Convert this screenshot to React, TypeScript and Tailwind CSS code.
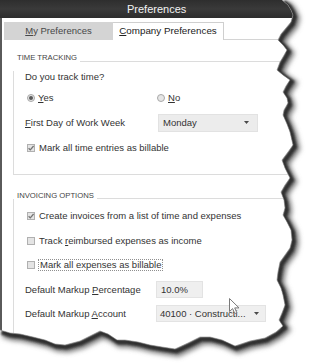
import React from "react";

const rightEdge: [number, number][] = [
  [282, 0], [288, 5], [291, 10], [293, 15], [291, 22], [286, 28], [281, 34], [278, 40], [283, 45], [287, 50],
  [283, 57], [280, 62], [277, 70], [283, 75], [290, 80], [286, 86], [283, 92], [287, 98], [288, 103], [284, 110],
  [283, 115], [287, 124], [290, 132], [293, 145], [288, 152], [282, 160], [285, 168], [290, 178], [285, 185],
  [281, 192], [284, 200], [285, 208], [283, 215], [287, 222], [291, 230], [292, 240], [290, 248], [285, 255],
  [280, 262], [278, 272], [277, 280], [281, 288], [283, 295], [285, 305], [282, 313], [279, 320], [283, 326],
];
const bottomEdge: [number, number][] = [
  [276, 332], [265, 338], [250, 341], [235, 346], [222, 340], [210, 337], [200, 337], [188, 343], [175, 349],
  [162, 347], [150, 345], [138, 342], [125, 340], [117, 340], [108, 334], [100, 331], [92, 335], [80, 341],
  [65, 345], [55, 344], [45, 340], [33, 337], [20, 334], [10, 333], [0, 330],
];
const edge = [...rightEdge, ...bottomEdge];
const edgeLine = "M" + edge.map((p) => p.join(",")).join(" L");
const outside = "M310,0 L" + edge.map((p) => p.join(",")).join(" L") + " L0,363 L310,363 Z";

function Check({ checked }: { checked?: boolean }) {
  return (
    <span className="relative w-[8px] h-[8px] border border-[#b0b0b0] bg-[#e4e4e4] shrink-0 flex items-center justify-center">
      {checked && (
        <svg width="8" height="8" viewBox="0 0 8 8" className="absolute left-[-1px] top-[-1px]">
          <path d="M1.6 4.2 L3.3 5.9 L6.6 2" stroke="#747474" strokeWidth="1.3" fill="none" />
        </svg>
      )}
    </span>
  );
}

function Radio({ checked }: { checked?: boolean }) {
  return (
    <span className="w-[8px] h-[8px] rounded-full border border-[#a8a8a8] bg-[#e6e6e6] shrink-0 flex items-center justify-center">
      {checked && <span className="w-[4px] h-[4px] rounded-full bg-[#595959]" />}
    </span>
  );
}

function Arrow() {
  return (
    <svg width="5" height="3" viewBox="0 0 5 3">
      <path d="M0 0 H5 L2.5 3 Z" fill="#4a4a4a" />
    </svg>
  );
}

function GroupHeader({ label }: { label: string }) {
  return (
    <div className="flex items-end">
      <span className="pl-[4px] pr-[3px] text-[7.7px] leading-none text-[#444]">{label}</span>
      <div className="flex-1 border-b border-[#dcdcdc]" />
    </div>
  );
}

export default function App() {
  return (
    <div className="relative w-[310px] h-[363px] bg-white overflow-hidden font-['Liberation_Sans',Arial,sans-serif] text-[9.5px] text-[#333]">
      <div className="w-[300px] h-[350px] flex flex-col">
        {/* Title bar */}
        <div className="h-[18px] bg-linear-to-b from-[#2e2e2e] via-[#3a3a3a] to-[#2c2c2c] flex items-center pl-[127px] text-[11px] text-[#f2f2f2] leading-none">
          Preferences
        </div>
        {/* Body */}
        <div className="flex-1 border-l-2 border-[#5a5a5a] bg-white pt-[4px] flex flex-col">
          {/* Tabs */}
          <div className="flex h-[18px] ml-[2px]">
            <div className="w-[109px] bg-[#d4d4d4] flex items-center justify-center text-[#474747]">
              <span>
                <u>M</u>y Preferences
              </span>
            </div>
            <div className="w-[111px] border-t border-r border-[#cfcfcf] bg-white flex items-center justify-center text-[9.8px] text-[#222]">
              <span>
                <u>C</u>ompany Preferences
              </span>
            </div>
            <div className="flex-1 border-b border-[#d4d4d4]" />
          </div>

          {/* Group 1 */}
          <div className="ml-[11px] mt-[14px]">
            <GroupHeader label="TIME TRACKING" />
            <div className="border-l border-b border-[#dcdcdc] pl-[11px] pb-[20px]">
              <div className="mt-[9px] h-[12px] flex items-center">Do you track time?</div>
              <div className="mt-[9px] h-[12px] flex items-center">
                <div className="w-[132px] flex items-center gap-[3px] pl-[2px]">
                  <Radio checked />
                  <span>
                    <u>Y</u>es
                  </span>
                </div>
                <div className="flex items-center gap-[3px]">
                  <Radio />
                  <span>
                    <u>N</u>o
                  </span>
                </div>
              </div>
              <div className="mt-[10px] h-[18px] flex items-center">
                <div className="w-[133px]">
                  <u>F</u>irst Day of Work Week
                </div>
                <div className="w-[100px] h-[18px] bg-[#ececec] border border-[#e2e2e2] flex items-center justify-between pl-[4px] pr-[8px]">
                  <span>Monday</span>
                  <Arrow />
                </div>
              </div>
              <div className="mt-[10px] h-[12px] flex items-center gap-[4px] pl-[2px]">
                <Check checked />
                <span>Mark all time entries as billable</span>
              </div>
            </div>
          </div>

          {/* Group 2 */}
          <div className="ml-[11px] mt-[17px] flex-1 flex flex-col">
            <GroupHeader label="INVOICING OPTIONS" />
            <div className="flex-1 border-l border-[#dcdcdc] pl-[11px]">
              <div className="mt-[11px] h-[12px] flex items-center gap-[4px] pl-[2px]">
                <Check checked />
                <span>Create invoices from a list of time and expenses</span>
              </div>
              <div className="mt-[13px] h-[12px] flex items-center gap-[4px] pl-[2px]">
                <Check />
                <span>
                  Track <u>r</u>eimbursed expenses as income
                </span>
              </div>
              <div className="mt-[12px] h-[12px] flex items-center gap-[3px] pl-[2px]">
                <Check />
                <span className="border border-dotted border-[#8f8f8f] px-[1px] leading-[10px]">Mark all expenses as billable</span>
              </div>
              <div className="mt-[10px] h-[17px] flex items-center">
                <div className="w-[131px]">
                  Default Markup <u>P</u>ercentage
                </div>
                <div className="w-[47px] h-[17px] bg-[#efefef] border border-[#e3e3e3] flex items-center pl-[4px]">
                  10.0%
                </div>
              </div>
              <div className="mt-[7px] h-[17px] flex items-center">
                <div className="w-[131px]">
                  Default Markup <u>A</u>ccount
                </div>
                <div className="w-[110px] h-[17px] bg-[#efefef] border border-[#e3e3e3] flex items-center justify-between pl-[3px] pr-[6px]">
                  <span>40100 · Constructi...</span>
                  <Arrow />
                </div>
              </div>
            </div>
          </div>
        </div>
      </div>

      {/* Mouse cursor */}
      <svg className="absolute left-[229px] top-[298px]" width="12" height="18" viewBox="0 0 12 18">
        <path d="M0.5 0.5 L0.5 13.5 L3.6 10.6 L5.8 15.6 L7.8 14.7 L5.7 9.9 L10 9.9 Z" fill="#fff" stroke="#7a7a7a" strokeWidth="1" />
      </svg>

      {/* Torn paper edge */}
      <svg className="absolute inset-0 pointer-events-none" width="310" height="363" viewBox="0 0 310 363">
        <defs>
          <clipPath id="outsideClip">
            <path d={outside} />
          </clipPath>
          <filter id="blur1" x="-10%" y="-10%" width="120%" height="120%">
            <feGaussianBlur stdDeviation="1.1" />
          </filter>
          <filter id="blur2" x="-10%" y="-10%" width="120%" height="120%">
            <feGaussianBlur stdDeviation="2.5" />
          </filter>
        </defs>
        <path d={outside} fill="#ffffff" />
        <g clipPath="url(#outsideClip)">
          <path d={edgeLine} transform="translate(3,3.5)" stroke="#777" strokeWidth="8" fill="none" filter="url(#blur2)" />
          <path d={edgeLine} transform="translate(1.5,2)" stroke="#2e2e2e" strokeWidth="5" fill="none" filter="url(#blur1)" />
        </g>
        <path d={edgeLine} stroke="#8a8a8a" strokeWidth="0.6" fill="none" />
      </svg>
    </div>
  );
}
